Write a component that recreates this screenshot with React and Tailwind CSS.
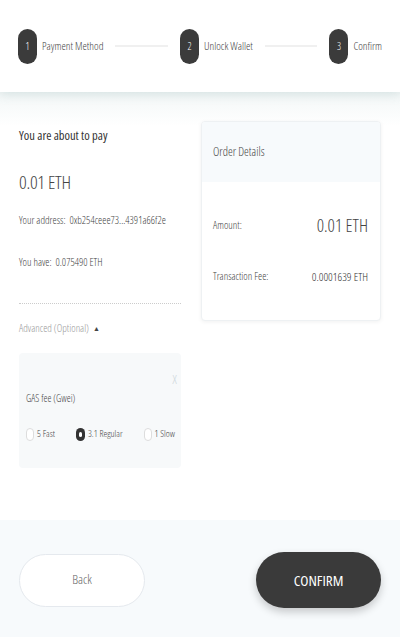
import React from 'react';

const steps = [
    { n: 1, label: 'Payment Method' },
    { n: 2, label: 'Unlock Wallet' },
    { n: 3, label: 'Confirm' }
];

function Step({ n, label }) {
    return (
        <div className="flex items-center">
            <div className="w-[19px] h-[35px] rounded-full bg-[#3b3b3b] text-white text-[10px] flex items-center justify-center">
                {n}
            </div>
            <span className="ml-[5px] text-[11px] text-[#444]">{label}</span>
        </div>
    );
}

function Radio({ checked, label }) {
    return (
        <label className="flex items-center gap-[3px] text-[9.5px] text-[#444] whitespace-nowrap">
            {checked ? (
                <span className="w-[9px] h-[13px] rounded-full bg-[#333] flex items-center justify-center">
                    <span className="w-[3px] h-[5px] rounded-full bg-white" />
                </span>
            ) : (
                <span className="w-[8px] h-[13px] rounded-full border border-[#ddd] bg-white" />
            )}
            {label}
        </label>
    );
}

export default function App() {
    return (
        <div className="w-[400px] h-[637px] bg-white flex flex-col overflow-hidden font-['Open_Sans',sans-serif] font-stretch-[80%] font-[350]">
            {/* Stepper */}
            <header className="h-[92px] shrink-0 bg-white flex items-center px-[18px] shadow-[0_2px_10px_rgba(120,160,160,0.25)] relative z-10">
                <Step {...steps[0]} />
                <div className="flex-1 mx-[12px] h-[2px] bg-[#f0f0f0]" />
                <Step {...steps[1]} />
                <div className="flex-1 mx-[12px] h-[2px] bg-[#f0f0f0]" />
                <Step {...steps[2]} />
            </header>

            <main className="flex-1 flex gap-[20px] px-[19px] pt-[30px] bg-gradient-to-b from-[#f3f7f7] via-white via-[8%] to-white">
                {/* Left column */}
                <div className="w-[162px] shrink-0">
                    <p className="text-[12.5px] text-[#333] mt-[5px] font-[380]">You are about to pay</p>
                    <p className="text-[19px] text-[#444] mt-[27px] leading-none font-light tracking-[-0.3px]">0.01 ETH</p>
                    <p className="text-[10.5px] text-[#444] mt-[21px] whitespace-nowrap">
                        Your address:&nbsp; 0xb254ceee73...4391a66f2e
                    </p>
                    <p className="text-[10.5px] text-[#444] mt-[26px]">You have:&nbsp; 0.075490 ETH</p>
                    <div className="mt-[33px] border-t border-dotted border-[#ccc]" />
                    <p className="text-[10.5px] text-[#999] mt-[17px] flex items-center gap-[4px]">
                        Advanced (Optional)
                        <span className="text-[7px] text-[#444]">▲</span>
                    </p>
                    <div className="mt-[16px] h-[115px] bg-[#f7f9fa] rounded-[4px] px-[7px] pt-[8px] relative">
                        <span className="absolute right-[4px] top-[17px] text-[13px] text-[#cfd8db]">X</span>
                        <p className="mt-[30px] text-[10px] text-[#444]">GAS fee (Gwei)</p>
                        <div className="mt-[21px] flex items-center gap-[21px]">
                            <Radio label="5 Fast" />
                            <Radio checked label="3.1 Regular" />
                            <Radio label="1 Slow" />
                        </div>
                    </div>
                </div>

                {/* Order details */}
                <div className="w-[180px] h-[200px] mt-[-1px] rounded-[4px] border border-[#eef1f3] shadow-[0_1px_4px_rgba(0,0,0,0.06)] overflow-hidden bg-white">
                    <div className="h-[60px] bg-[#f7fafc] flex items-center px-[11px] text-[12px] text-[#444]">
                        Order Details
                    </div>
                    <div className="px-[11px] pr-[12px]">
                        <div className="flex items-center justify-between mt-[30px]">
                            <span className="text-[10.5px] text-[#444]">Amount:</span>
                            <span className="text-[18px] text-[#444] font-light">0.01 ETH</span>
                        </div>
                        <div className="flex items-center justify-between mt-[29px]">
                            <span className="text-[10.5px] text-[#444]">Transaction Fee:</span>
                            <span className="text-[11.5px] text-[#333]">0.0001639 ETH</span>
                        </div>
                    </div>
                </div>
            </main>

            {/* Footer */}
            <footer className="h-[117px] shrink-0 bg-[#f7fafc] flex items-center justify-between px-[19px] pt-[3px]">
                <button className="w-[126px] h-[53px] rounded-full bg-white border border-[#e5e9ee] text-[13px] text-[#666]">
                    Back
                </button>
                <button className="w-[125px] h-[56px] rounded-full bg-[#3a3a3a] text-white text-[15px] font-[380] shadow-[0_4px_8px_rgba(0,0,0,0.2)]">
                    CONFIRM
                </button>
            </footer>
        </div>
    );
}
